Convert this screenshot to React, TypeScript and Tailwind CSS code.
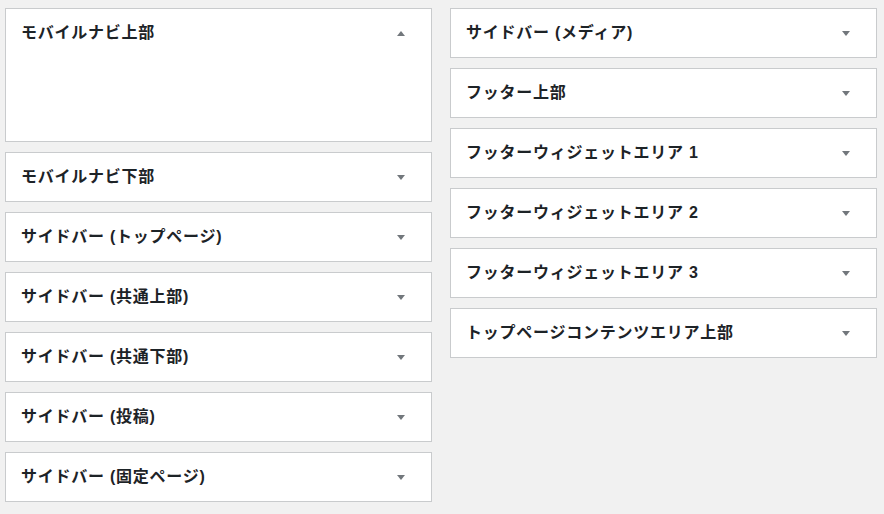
import React from 'react';

const leftWidgets = [
  'モバイルナビ下部',
  'サイドバー (トップページ)',
  'サイドバー (共通上部)',
  'サイドバー (共通下部)',
  'サイドバー (投稿)',
  'サイドバー (固定ページ)',
];

const rightWidgets = [
  'サイドバー (メディア)',
  'フッター上部',
  'フッターウィジェットエリア 1',
  'フッターウィジェットエリア 2',
  'フッターウィジェットエリア 3',
  'トップページコンテンツエリア上部',
];

function Caret({ up = false }: { up?: boolean }) {
  return (
    <svg width="8" height="5" viewBox="0 0 8 5" className="shrink-0">
      {up ? (
        <path d="M4 0 L8 5 L0 5 Z" fill="#72777c" />
      ) : (
        <path d="M0 0 L8 0 L4 5 Z" fill="#72777c" />
      )}
    </svg>
  );
}

function WidgetArea({ title, open = false }: { title: string; open?: boolean }) {
  return (
    <div className="bg-white border border-[#c9cbcd] mb-[10px]">
      <div className="h-[48px] flex items-center pl-[15px] pr-[26px]">
        <h3 className="flex-1 text-[16px] font-bold text-[#1d2327] tracking-[0.75px]">{title}</h3>
        <Caret up={open} />
      </div>
      {open && <div className="h-[84px]" />}
    </div>
  );
}

export default function App() {
  return (
    <div
      className="w-[884px] h-[514px] bg-[#f1f1f1] overflow-hidden pt-[8px] pl-[5px] flex gap-[18px]"
      style={{ fontFamily: '"Liberation Sans", "Noto Sans CJK JP", sans-serif' }}
    >
      <div className="w-[427px]">
        <WidgetArea title="モバイルナビ上部" open />
        {leftWidgets.map(t => (
          <WidgetArea key={t} title={t} />
        ))}
      </div>
      <div className="w-[427px]">
        {rightWidgets.map(t => (
          <WidgetArea key={t} title={t} />
        ))}
      </div>
    </div>
  );
}
